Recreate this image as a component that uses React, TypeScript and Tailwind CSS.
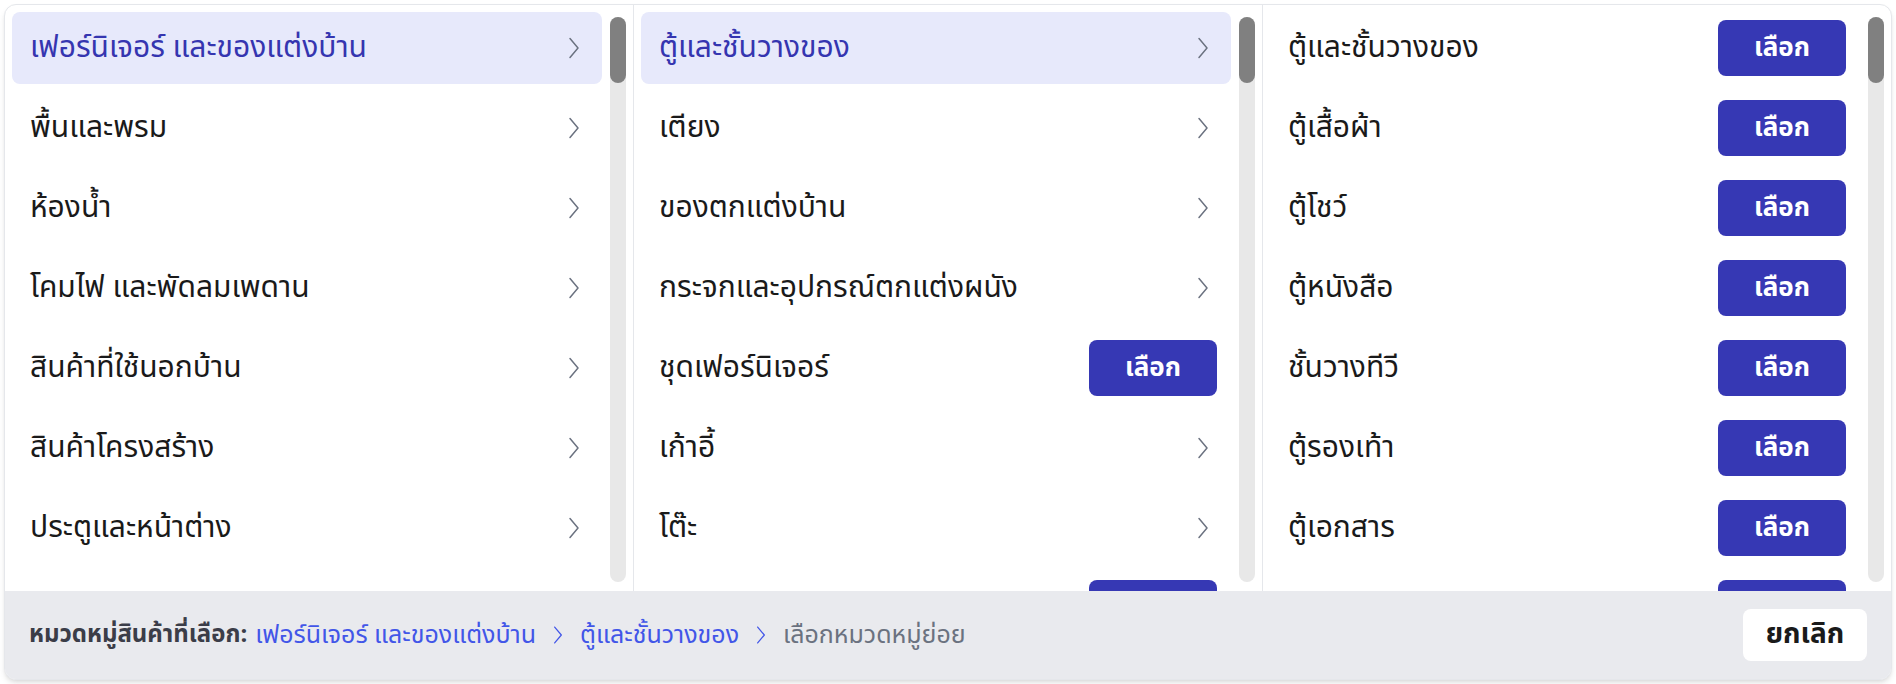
import { FC } from 'react';

type Item = { label: string; leaf?: boolean };

const col1: Item[] = [
  { label: 'เฟอร์นิเจอร์ และของแต่งบ้าน' },
  { label: 'พื้นและพรม' },
  { label: 'ห้องน้ำ' },
  { label: 'โคมไฟ และพัดลมเพดาน' },
  { label: 'สินค้าที่ใช้นอกบ้าน' },
  { label: 'สินค้าโครงสร้าง' },
  { label: 'ประตูและหน้าต่าง' },
];

const col2: Item[] = [
  { label: 'ตู้และชั้นวางของ' },
  { label: 'เตียง' },
  { label: 'ของตกแต่งบ้าน' },
  { label: 'กระจกและอุปกรณ์ตกแต่งผนัง' },
  { label: 'ชุดเฟอร์นิเจอร์', leaf: true },
  { label: 'เก้าอี้' },
  { label: 'โต๊ะ' },
  { label: 'โซฟา', leaf: true },
];

const col3: Item[] = [
  { label: 'ตู้และชั้นวางของ', leaf: true },
  { label: 'ตู้เสื้อผ้า', leaf: true },
  { label: 'ตู้โชว์', leaf: true },
  { label: 'ตู้หนังสือ', leaf: true },
  { label: 'ชั้นวางทีวี', leaf: true },
  { label: 'ตู้รองเท้า', leaf: true },
  { label: 'ตู้เอกสาร', leaf: true },
  { label: 'ตะแกรง', leaf: true },
];

const Chevron: FC<{ className?: string }> = ({ className = 'w-6 h-6 text-[#6b7280]' }) => (
  <svg viewBox="0 0 24 24" fill="none" stroke="currentColor" strokeWidth={1.5} strokeLinecap="round" strokeLinejoin="round" className={className}>
    <path d="M8 2.5 L16 12 L8 21.5" />
  </svg>
);

const Column: FC<{ items: Item[]; selected?: number; last?: boolean }> = ({ items, selected, last }) => (
  <div className={`flex-1 flex min-w-0 pl-[7px] pr-[7px] pt-[7px] gap-2 overflow-hidden ${last ? '' : 'border-r border-[#e5e7eb]'}`}>
    <div className="flex-1 flex flex-col gap-2 min-w-0">
      {items.map((item, i) => (
        <div
          key={item.label}
          className={`h-[72px] shrink-0 flex items-center justify-between rounded-lg pl-[18px] ${
            item.leaf ? 'pr-[14px]' : 'pr-4'
          } ${i === selected ? 'bg-[#e7e9fb] text-[#3535b0]' : 'text-[#1a1a1a]'}`}
        >
          <span className="text-[30px] leading-none">{item.label}</span>
          {item.leaf ? (
            <button className="w-[128px] h-[56px] rounded-lg bg-[#3638b4] text-white text-[26px] font-bold">เลือก</button>
          ) : (
            <Chevron />
          )}
        </div>
      ))}
    </div>
    <div className="w-4 shrink-0 mt-[5px] mb-[9px] rounded-full bg-[#e8e8e8] flex flex-col">
      <div className="h-[66px] rounded-full bg-[#808080]" />
    </div>
  </div>
);

const App: FC = () => {
  return (
    <div className="p-1 bg-white h-[684px]" style={{ fontFamily: '"Noto Sans Thai", "Noto Sans", sans-serif' }}>
      <div className="h-[676px] flex flex-col rounded-xl border border-[#e5e7eb] bg-white shadow-md overflow-hidden">
        <div className="flex-1 flex min-h-0">
          <Column items={col1} selected={0} />
          <Column items={col2} selected={0} />
          <Column items={col3} last />
        </div>
        <div className="h-[88px] shrink-0 bg-[#e9eaee] flex items-center justify-between pl-6 pr-6">
          <div className="flex items-center gap-2 text-[25px] leading-none">
            <span className="font-bold text-[#3b3d48] text-[24px]">หมวดหมู่สินค้าที่เลือก:</span>
            <span className="text-[#4256e8]">เฟอร์นิเจอร์ และของแต่งบ้าน</span>
            <Chevron className="w-5 h-5 mx-1 text-[#4256e8]" />
            <span className="text-[#4256e8]">ตู้และชั้นวางของ</span>
            <Chevron className="w-5 h-5 mx-1 text-[#4256e8]" />
            <span className="text-[#6b7280]">เลือกหมวดหมู่ย่อย</span>
          </div>
          <button className="w-[124px] h-[52px] rounded-lg bg-white text-[28px] font-bold text-[#1a1a1a]">ยกเลิก</button>
        </div>
      </div>
    </div>
  );
};

export default App;
